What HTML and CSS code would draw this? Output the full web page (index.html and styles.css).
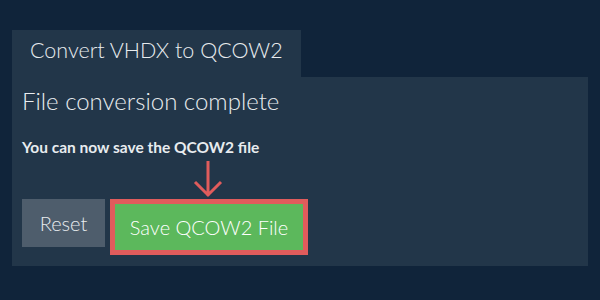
FILE: index.html
```html
<!DOCTYPE html>
<html>
<head>
<meta charset="utf-8">
<link rel="stylesheet" href="styles.css">
</head>
<body>
<div class="wrap">
  <div class="tab">Convert VHDX to QCOW2</div>
  <div class="panel">
    <h1 class="title">File conversion complete</h1>
    <p class="msg">You can now save the QCOW2 file</p>
    <div class="actions">
      <button class="btn reset">Reset</button>
      <div class="save-wrap">
        <svg class="arrow" width="30" height="38" viewBox="0 0 30 38">
          <path d="M15 0 V35 M2 21 L15 34 L28 21" fill="none" stroke="#e05c5c" stroke-width="3"/>
        </svg>
        <button class="btn save">Save QCOW2 File</button>
      </div>
    </div>
  </div>
</div>
</body>
</html>
```
FILE: styles.css
```css
html, body {
  margin: 0;
  padding: 0;
  background: #10243a;
  font-family: Lato, "Noto Sans", sans-serif;
  color: #e8ecef;
}
.wrap {
  padding: 30px 12px 0 12px;
}
.tab {
  display: inline-block;
  background: #223649;
  width: 289px;
  height: 47px;
  box-sizing: border-box;
  padding: 5px 0 0 18px;
  font-size: 21.5px;
  font-weight: 300;
  line-height: 30px;
}
.panel {
  background: #223649;
  height: 189px;
  box-sizing: border-box;
  padding: 9px 10px 0 10px;
}
.title {
  margin: 0;
  font-weight: 300;
  font-size: 24px;
  line-height: 30px;
}
.msg {
  margin: 20px 0 0 0;
  font-weight: 700;
  font-size: 15.5px;
  line-height: 22px;
}
.actions {
  display: flex;
  align-items: flex-start;
  gap: 5px;
  margin-top: 41px;
}
.save-wrap {
  position: relative;
}
.arrow {
  position: absolute;
  left: 83px;
  top: -38px;
}
.btn {
  border: none;
  margin: 0;
  font-family: Lato, "Noto Sans", sans-serif;
  font-weight: 300;
  color: #ffffff;
  font-size: 20px;
  cursor: pointer;
}
.reset {
  background: #4e5d6c;
  width: 83px;
  height: 48px;
  color: #e8ecef;
}
.save {
  background: #5cb85c;
  border: 5px solid #e05c5c;
  width: 198px;
  height: 56px;
}
```
